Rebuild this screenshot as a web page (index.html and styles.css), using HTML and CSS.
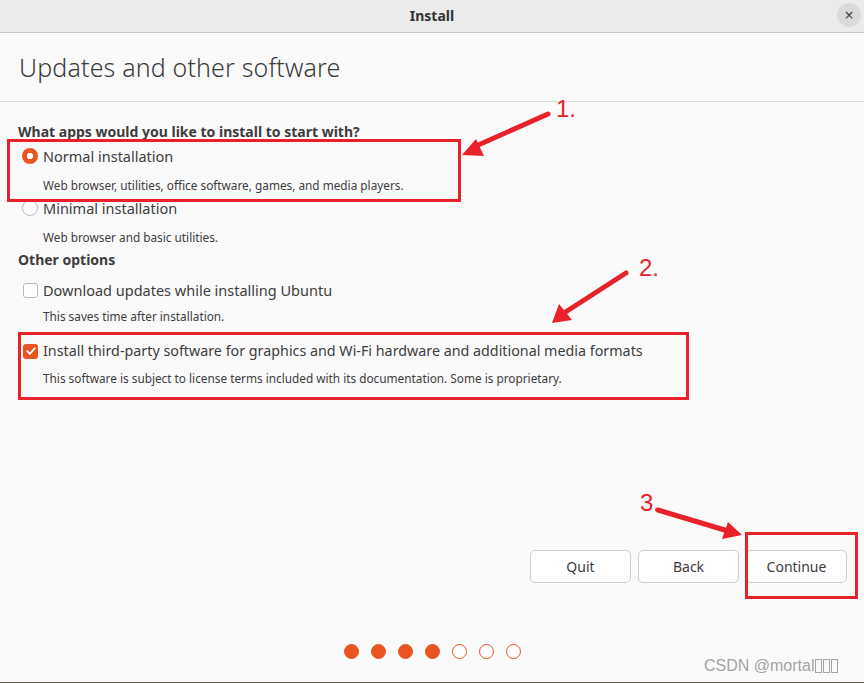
FILE: index.html
```html
<!DOCTYPE html>
<html>
<head>
<meta charset="utf-8">
<link rel="stylesheet" href="styles.css">
</head>
<body>
<div class="window">
  <div class="titlebar">
    <span class="title">Install</span>
    <span class="close">×</span>
  </div>
  <div class="header">Updates and other software</div>
  <div class="content">
    <div class="row heading q">What apps would you like to install to start with?</div>
    <div class="row opt r1"><span class="radio on"></span><span class="label">Normal installation</span></div>
    <div class="row desc d1">Web browser, utilities, office software, games, and media players.</div>
    <div class="row opt r2"><span class="radio"></span><span class="label">Minimal installation</span></div>
    <div class="row desc d2">Web browser and basic utilities.</div>
    <div class="row heading oo">Other options</div>
    <div class="row opt c1"><span class="check"></span><span class="label">Download updates while installing Ubuntu</span></div>
    <div class="row desc d3">This saves time after installation.</div>
    <div class="row opt c2"><span class="check on"><svg viewBox="0 0 14 14" width="14" height="14"><path d="M3.2 7.2 L5.9 9.9 L10.8 4.2" fill="none" stroke="#fff" stroke-width="1.8" stroke-linecap="round" stroke-linejoin="round"/></svg></span><span class="label long">Install third-party software for graphics and Wi-Fi hardware and additional media formats</span></div>
    <div class="row desc d4">This software is subject to license terms included with its documentation. Some is proprietary.</div>
  </div>
  <div class="buttons">
    <button class="btn">Quit</button>
    <button class="btn">Back</button>
    <button class="btn">Continue</button>
  </div>
  <div class="dots">
    <span class="dot on"></span><span class="dot on"></span><span class="dot on"></span><span class="dot on"></span><span class="dot"></span><span class="dot"></span><span class="dot"></span>
  </div>
  <div class="watermark">CSDN @mortal<span class="tofu"></span><span class="tofu"></span><span class="tofu"></span></div>
</div>
<svg class="annot" width="864" height="683" viewBox="0 0 864 683">
  <g fill="none" stroke="#e8212b" stroke-width="3">
    <rect x="8.5" y="140.5" width="451" height="60"/>
    <rect x="19.5" y="333.5" width="668" height="65"/>
    <rect x="746.5" y="533.5" width="110" height="64"/>
  </g>
  <g stroke="#e8212b" stroke-width="5" stroke-linecap="round">
    <line x1="548" y1="114" x2="476" y2="146"/>
    <line x1="626" y1="273" x2="564" y2="313"/>
    <line x1="658" y1="510" x2="728" y2="531"/>
  </g>
  <g fill="#e8212b">
    <polygon points="462,155 476,139 484,156"/>
    <polygon points="552,323 559,304 572,320"/>
    <polygon points="742,535 728,522 722,539"/>
  </g>
  <g fill="#e8212b" font-family="'Liberation Sans', sans-serif" font-size="24">
    <text x="556" y="117">1.</text>
    <text x="639" y="276">2.</text>
    <text x="640" y="511">3.</text>
  </g>
</svg>
</body>
</html>
```
FILE: styles.css
```css
html, body {
  margin: 0;
  padding: 0;
}
body {
  width: 864px;
  height: 683px;
  overflow: hidden;
  background: #fafafa;
  font-family: "Noto Sans", "Open Sans", sans-serif;
  color: #3d3d3d;
  position: relative;
}
.window {
  width: 864px;
  height: 682px;
  border-bottom: 1px solid #5e5c40;
  display: flex;
  flex-direction: column;
  background: #fafafa;
}
.titlebar {
  height: 32px;
  background: #ebebeb;
  border-bottom: 1px solid #c9c9c9;
  display: flex;
  align-items: center;
  justify-content: center;
  position: relative;
}
.title {
  font-weight: bold;
  font-size: 14px;
  color: #333;
  margin-top: -1px;
}
.close {
  position: absolute;
  right: 3px;
  top: 3px;
  width: 24px;
  height: 24px;
  border-radius: 50%;
  background: #dadada;
  display: flex;
  align-items: center;
  justify-content: center;
  font-size: 16px;
  color: #444;
  line-height: 1;
}
.header {
  height: 68px;
  border-bottom: 1px solid #dcdcdc;
  display: flex;
  align-items: center;
  padding-left: 19px;
  font-size: 25px;
  letter-spacing: 0.15px;
  font-weight: 300;
  color: #3a3a3a;
}
.content {
  display: flex;
  flex-direction: column;
}
.row {
  height: 22px;
  line-height: 22px;
  display: flex;
  align-items: center;
  white-space: nowrap;
}
.heading {
  font-weight: bold;
  font-size: 14px;
  padding-left: 18px;
}
.opt {
  font-size: 14.5px;
  padding-left: 22px;
}
.label.long {
  font-size: 14.3px;
}
.desc {
  font-size: 11.8px;
  padding-left: 43px;
}
.q { margin-top: 19px; }
.r1 { margin-top: 2px; }
.d1 { margin-top: 7px; }
.r2 { margin-top: 1px; }
.d2 { margin-top: 7px; }
.oo { margin-top: 1px; }
.c1 { margin-top: 8px; }
.d3 { margin-top: 4px; }
.c2 { margin-top: 13px; }
.d4 { margin-top: 5px; }
.radio {
  width: 14px;
  height: 14px;
  border-radius: 50%;
  border: 1px solid #b9b9b9;
  background: #fff;
  margin-right: 5px;
  box-sizing: content-box;
  flex: none;
}
.radio.on {
  width: 16px;
  height: 16px;
  border: none;
  background: radial-gradient(circle, #fff 0 3px, #e95420 3.5px);
}
.check {
  width: 13px;
  height: 13px;
  border: 1px solid #b9b9b9;
  border-radius: 3px;
  background: #fff;
  margin-left: 1px;
  margin-right: 5px;
  flex: none;
  display: flex;
}
.check.on {
  width: 15px;
  height: 15px;
  border: none;
  background: #e95420;
}
.check svg {
  display: block;
  margin: auto;
}
.buttons {
  margin-top: 161px;
  display: flex;
  justify-content: flex-end;
  gap: 7px;
  padding-right: 17px;
}
.btn {
  width: 101px;
  height: 33px;
  border: 1px solid #cdcdcd;
  border-radius: 5px;
  background: #fff;
  font-family: inherit;
  font-size: 14px;
  color: #3d3d3d;
  padding: 0;
}
.dots {
  margin-top: 61px;
  display: flex;
  justify-content: center;
  gap: 12px;
}
.dot {
  width: 13px;
  height: 13px;
  border-radius: 50%;
  border: 1.2px solid #e95420;
  background: #fff;
}
.dot.on {
  background: #e95420;
}
.watermark {
  position: absolute;
  left: 704px;
  top: 657px;
  font-family: "Liberation Sans", sans-serif;
  font-size: 16px;
  color: #a3a3a3;
  display: flex;
  align-items: center;
}
.tofu {
  display: inline-block;
  width: 5px;
  height: 12px;
  border: 1px solid #a3a3a3;
  margin-left: 1px;
}
.annot {
  position: absolute;
  left: 0;
  top: 0;
  pointer-events: none;
}
```
